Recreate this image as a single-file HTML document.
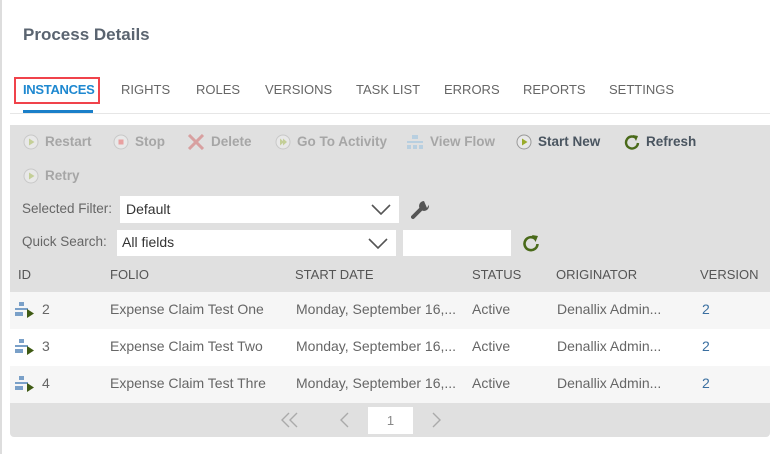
<!DOCTYPE html>
<html><head><style>
body{margin:0;width:780px;height:454px;background:#fff;font-family:"Liberation Sans",sans-serif;position:relative;overflow:hidden;color:#555}
.a{position:absolute;white-space:nowrap}
.lb{position:absolute;left:0;top:0;width:2px;height:454px;background:#ddd}
.tab{position:absolute;top:82px;font-size:13px;color:#666}
.panel{position:absolute;left:10px;top:125px;width:760px;height:312px;background:#e0e0e0;border-radius:0 0 4px 4px}
.tb{position:absolute;font-size:13.5px;color:#a6a6a6;font-weight:bold}
.tb svg{vertical-align:-4px;margin-right:6px}
.row{position:absolute;left:10px;width:760px;height:37px;font-size:14px;color:#666}
.row span{position:absolute;top:9px}
.row svg{position:absolute;left:5px;top:10px}
.hd span{position:absolute;top:7px;font-size:13px;color:#555}
.sel{position:absolute;background:#fff}
</style></head><body>
<div class="lb"></div>
<div class="a" style="left:23px;top:25px;font-size:17px;font-weight:bold;color:#5a6470">Process Details</div>
<div class="a" style="left:14px;top:77px;width:86px;height:27px;border:2px solid #f0434b;box-sizing:border-box"></div>
<div class="tab" style="left:23px;color:#1e88d0;font-weight:bold;letter-spacing:-0.3px">INSTANCES</div>
<div class="a" style="left:23px;top:110px;width:70px;height:3px;background:#1a7fc9"></div>
<div class="a" style="left:10px;top:113px;width:760px;height:1px;background:#e6e6e6"></div>
<div class="tab" style="left:121px">RIGHTS</div>
<div class="tab" style="left:196px">ROLES</div>
<div class="tab" style="left:265px">VERSIONS</div>
<div class="tab" style="left:356px">TASK LIST</div>
<div class="tab" style="left:444px">ERRORS</div>
<div class="tab" style="left:523px">REPORTS</div>
<div class="tab" style="left:609px">SETTINGS</div>
<div class="panel"></div>
<div class="tb" style="left:23px;top:134px"><svg width="16" height="16"><circle cx="8" cy="8" r="7" fill="#e8e8e8" stroke="#c8c8c8"/><path d="M6 4.5L11.5 8L6 11.5Z" fill="#c4cf98"/></svg>Restart</div>
<div class="tb" style="left:113px;top:134px"><svg width="16" height="16"><circle cx="8" cy="8" r="7" fill="#e8e8e8" stroke="#c8c8c8"/><rect x="5.5" y="5.5" width="5" height="5" fill="#e8a0a0"/></svg>Stop</div>
<div class="tb" style="left:187px;top:134px"><svg width="18" height="16"><path d="M2 1L16 15M16 1L2 15" stroke="#d8a0a0" stroke-width="3"/></svg>Delete</div>
<div class="tb" style="left:275px;top:134px"><svg width="16" height="16"><circle cx="8" cy="8" r="7" fill="#e8e8e8" stroke="#c8c8c8"/><path d="M5 4.5L9 8L5 11.5ZM8 4.5L12 8L8 11.5Z" fill="#c4cf98"/></svg>Go To Activity</div>
<div class="tb" style="left:406px;top:134px"><svg width="18" height="16"><rect x="6" y="1" width="6" height="4" fill="#b8cfe0"/><rect x="1" y="7" width="16" height="2" fill="#b8cfe0"/><rect x="1" y="11" width="4" height="4" fill="#b8cfe0"/><rect x="7" y="11" width="4" height="4" fill="#b8cfe0"/><rect x="13" y="11" width="4" height="4" fill="#b8cfe0"/></svg>View Flow</div>
<div class="tb" style="left:516px;top:134px;color:#4a5560"><svg width="16" height="16"><circle cx="8" cy="8" r="7" fill="#e8e8e8" stroke="#999"/><path d="M6 4.5L11.5 8L6 11.5Z" fill="#9aab2a"/></svg>Start New</div>
<div class="tb" style="left:624px;top:134px;color:#4a5560"><svg width="16" height="16"><path d="M12.5 4.5A6 6 0 1 0 14 9" fill="none" stroke="#4a6a1a" stroke-width="2.4"/><path d="M9 1L14 2L12 7Z" fill="#4a6a1a"/></svg>Refresh</div>
<div class="tb" style="left:23px;top:168px"><svg width="16" height="16"><circle cx="8" cy="8" r="7" fill="#e8e8e8" stroke="#c8c8c8"/><path d="M6 4.5L11.5 8L6 11.5Z" fill="#c4cf98"/></svg>Retry</div>
<div class="a" style="left:22px;top:201px;font-size:13.5px;color:#666">Selected Filter:</div>
<div class="sel" style="left:120px;top:196px;width:279px;height:27px"><span class="a" style="left:6px;top:5px;font-size:14px;color:#333">Default</span><svg class="a" style="right:8px;top:8px" width="20" height="11"><path d="M1 1L10 10L19 1" fill="none" stroke="#555" stroke-width="1.6"/></svg></div>
<svg class="a" style="left:411px;top:200px" width="20" height="20"><path d="M2 17L10 9" stroke="#555" stroke-width="4" stroke-linecap="round"/><circle cx="13" cy="6" r="5" fill="#555"/><path d="M13 1L20 1L16 8Z" fill="#e0e0e0"/></svg>
<div class="a" style="left:22px;top:234px;font-size:13.5px;color:#666">Quick Search:</div>
<div class="sel" style="left:117px;top:230px;width:279px;height:26px"><span class="a" style="left:5px;top:4px;font-size:14px;color:#333">All fields</span><svg class="a" style="right:8px;top:8px" width="20" height="11"><path d="M1 1L10 10L19 1" fill="none" stroke="#555" stroke-width="1.6"/></svg></div>
<div class="sel" style="left:403px;top:230px;width:108px;height:26px"></div>
<svg class="a" style="left:522px;top:234px" width="18" height="18"><path d="M13.5 5A6.5 6.5 0 1 0 15.5 10" fill="none" stroke="#4a6a1a" stroke-width="2.6"/><path d="M10 1L16 2L13.5 8Z" fill="#4a6a1a"/></svg>
<div class="row hd" style="top:260px;height:32px"><span style="left:8px">ID</span><span style="left:100px">FOLIO</span><span style="left:285px">START DATE</span><span style="left:462px">STATUS</span><span style="left:546px">ORIGINATOR</span><span style="left:690px">VERSION</span></div>
<div class="row" style="top:292px;background:#f6f6f6"><svg width="20" height="16"><rect x="4" y="0" width="5" height="4" fill="#7aa0c8"/><rect x="0" y="6" width="13" height="2" fill="#7aa0c8"/><rect x="0" y="10" width="8" height="4" fill="#7aa0c8"/><path d="M12 7L19 11.5L12 16Z" fill="#3f5a14"/></svg><span style="left:32px">2</span><span style="left:100px">Expense Claim Test One</span><span style="left:286px">Monday, September 16,...</span><span style="left:462px">Active</span><span style="left:547px">Denallix Admin...</span><span style="left:692px;color:#3a6fa0">2</span></div>
<div class="row" style="top:329px;background:#fff"><svg width="20" height="16"><rect x="4" y="0" width="5" height="4" fill="#7aa0c8"/><rect x="0" y="6" width="13" height="2" fill="#7aa0c8"/><rect x="0" y="10" width="8" height="4" fill="#7aa0c8"/><path d="M12 7L19 11.5L12 16Z" fill="#3f5a14"/></svg><span style="left:32px">3</span><span style="left:100px">Expense Claim Test Two</span><span style="left:286px">Monday, September 16,...</span><span style="left:462px">Active</span><span style="left:547px">Denallix Admin...</span><span style="left:692px;color:#3a6fa0">2</span></div>
<div class="row" style="top:366px;background:#f6f6f6"><svg width="20" height="16"><rect x="4" y="0" width="5" height="4" fill="#7aa0c8"/><rect x="0" y="6" width="13" height="2" fill="#7aa0c8"/><rect x="0" y="10" width="8" height="4" fill="#7aa0c8"/><path d="M12 7L19 11.5L12 16Z" fill="#3f5a14"/></svg><span style="left:32px">4</span><span style="left:100px">Expense Claim Test Thre</span><span style="left:286px">Monday, September 16,...</span><span style="left:462px">Active</span><span style="left:547px">Denallix Admin...</span><span style="left:692px;color:#3a6fa0">2</span></div>
<svg class="a" style="left:280px;top:412px" width="20" height="16"><path d="M9 1L2 8L9 15M17 1L10 8L17 15" fill="none" stroke="#aaa" stroke-width="1.4"/></svg>
<svg class="a" style="left:338px;top:412px" width="12" height="16"><path d="M10 1L3 8L10 15" fill="none" stroke="#aaa" stroke-width="1.4"/></svg>
<div class="a" style="left:368px;top:407px;width:45px;height:27px;background:#fff;font-size:13px;text-align:center;line-height:27px;color:#888">1</div>
<svg class="a" style="left:431px;top:412px" width="12" height="16"><path d="M2 1L9 8L2 15" fill="none" stroke="#aaa" stroke-width="1.4"/></svg>
</body></html>
